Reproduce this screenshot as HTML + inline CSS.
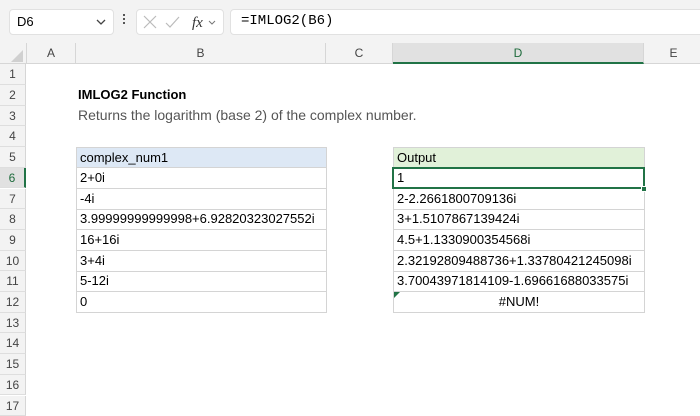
<!DOCTYPE html>
<html><head><meta charset="utf-8"><style>
*{margin:0;padding:0;box-sizing:border-box}
body{width:700px;height:400px;overflow:hidden;background:#fff;font-family:"Liberation Sans",sans-serif;position:relative;color:#000}
.a{position:absolute}
.tb{left:0;top:0;width:700px;height:43px;background:#f3f3f3}
.box{background:#fff;border:1px solid #e1e1e1;border-radius:4px}
.hdr{top:43px;height:21px;background:#f3f3f3;border-bottom:1px solid #d6d6d6;left:0;width:700px}
.ch{top:43px;height:21px;font-size:12px;color:#444;text-align:center;line-height:21px;border-right:1px solid #d6d6d6}
.rh{left:0;width:26px;font-size:12px;color:#444;text-align:center;background:#f3f3f3;border-bottom:1px solid #dedede;border-right:1px solid #d6d6d6}
.cell{font-size:13px;padding-left:3px;border:1px solid #d4d4d4;border-top:none;white-space:nowrap;overflow:hidden}
</style></head><body>
<div class="a tb"></div>
<div class="a box" style="left:9px;top:9px;width:105px;height:26px"></div>
<div class="a" style="left:17px;top:14px;font-size:13px">D6</div>
<svg class="a" style="left:95px;top:17px" width="12" height="10"><path d="M2 3 L6 7 L10 3" stroke="#444" stroke-width="1.3" fill="none"/></svg>
<div class="a" style="left:123px;top:14px;width:2px;height:2px;background:#555;box-shadow:0 4px #555,0 8px #555"></div>
<div class="a box" style="left:136px;top:9px;width:88px;height:26px"></div>
<svg class="a" style="left:142px;top:14px" width="80" height="16"><path d="M2 2 L14 14 M14 2 L2 14" stroke="#bbb" stroke-width="1.2"/><path d="M24 9 L28 13 L37 3" stroke="#bbb" stroke-width="1.2" fill="none"/><text x="50" y="13" font-family="Liberation Serif" font-style="italic" font-size="15" fill="#333">fx</text><path d="M67 7 L70 10 L73 7" stroke="#777" stroke-width="1" fill="none"/></svg>
<div class="a box" style="left:230px;top:9px;width:475px;height:26px"></div>
<div class="a" style="left:241px;top:13px;font-family:'Liberation Mono',monospace;font-size:14px">=IMLOG2(B6)</div>
<div class="a hdr"></div>
<svg class="a" style="left:10px;top:50px" width="14" height="12"><path d="M13 0 L13 12 L1 12 Z" fill="#d0d0d0"/></svg>
<div class="a ch" style="left:26px;width:50px;border-left:1px solid #d6d6d6">A</div>
<div class="a ch" style="left:76px;width:250px">B</div>
<div class="a ch" style="left:326px;width:67px">C</div>
<div class="a ch" style="left:393px;width:251px;background:#e1e1e1;color:#1e6b3c;border-bottom:2px solid #217346">D</div>
<div class="a ch" style="left:644px;width:60px">E</div>
<div id="rows"></div>
<div class="a" style="left:78px;top:87px;font-size:13px;font-weight:bold">IMLOG2 Function</div>
<div class="a" style="left:78px;top:107px;font-size:14px;color:#555">Returns the logarithm (base 2) of the complex number.</div>
<script>
var h=20.7,t=64.3,s='';
for(var i=1;i<=17;i++){var y=t+(i-1)*h;s+='<div class="a rh" style="top:'+y+'px;height:'+h+'px;line-height:'+h+'px;'+(i==6?'background:#e1e1e1;color:#1e6b3c;border-right:2px solid #217346':'')+'">'+i+'</div>';}
var B=['complex_num1','2+0i','-4i','3.99999999999998+6.92820323027552i','16+16i','3+4i','5-12i','0'];
var D=['Output','1','2-2.2661800709136i','3+1.5107867139424i','4.5+1.1330900354568i','2.32192809488736+1.33780421245098i','3.70043971814109-1.69661688033575i','#NUM!'];
for(var k=0;k<8;k++){var y=t+(4+k)*h;
s+='<div class="a cell" style="left:76px;top:'+y+'px;width:251px;height:'+(h+0.5)+'px;line-height:'+h+'px;'+(k==0?'background:#dde8f5;border-top:1px solid #d4d4d4':'')+'">'+B[k]+'</div>';
s+='<div class="a cell" style="left:393px;top:'+y+'px;width:252px;height:'+(h+0.5)+'px;line-height:'+h+'px;'+(k==0?'background:#e1f1d9;border-top:1px solid #d4d4d4;':'')+(k==7?'text-align:center;padding-left:0':'')+'">'+D[k]+'</div>';}
s+='<div class="a" style="left:392px;top:'+(t+5*h-1)+'px;width:253px;height:'+(h+1.5)+'px;border:2px solid #217346"></div>';
s+='<div class="a" style="left:641px;top:'+(t+6*h-3)+'px;width:6px;height:6px;background:#217346;border:1px solid #fff"></div>';
s+='<svg class="a" style="left:394px;top:'+(t+11*h)+'px" width="6" height="6"><path d="M0 0 L6 0 L0 6Z" fill="#217346"/></svg>';
document.getElementById('rows').innerHTML=s;
</script>
</body></html>
